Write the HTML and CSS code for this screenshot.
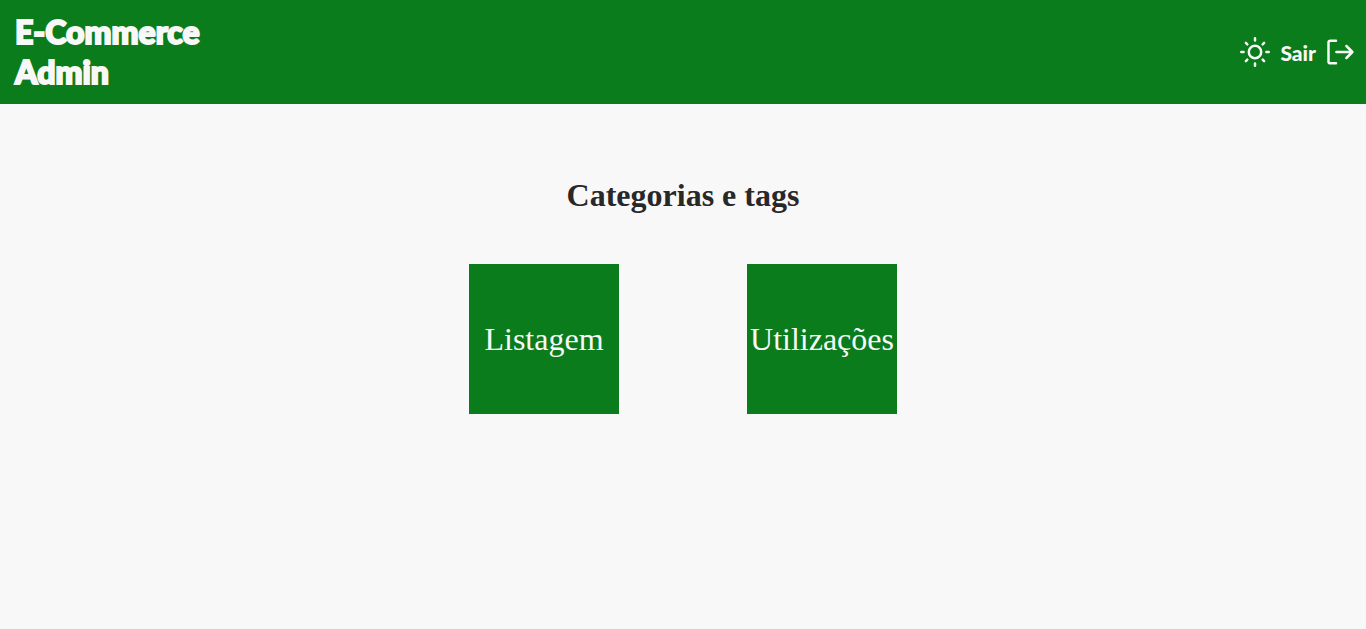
FILE: index.html
```html
<!DOCTYPE html>
<html lang="pt-BR">
<head>
  <meta charset="utf-8">
  <meta name="viewport" content="width=device-width, initial-scale=1">
  <title>E-Commerce Admin</title>
  <link rel="stylesheet" href="styles.css">
</head>
<body>
  <header class="topbar">
    <a class="brand" href="#">E-Commerce<br>Admin</a>
    <div class="actions">
      <button class="theme-toggle" type="button" aria-label="Alternar tema">
        <svg class="icon" viewBox="0 0 32 32" aria-hidden="true">
          <circle cx="16" cy="16" r="6.2"/>
          <path d="M16 2.3v2.3M16 27.4v2.3M2.3 16h2.3M27.4 16h2.3M6.9 6.9l1.4 1.4M23.7 23.7l1.4 1.4M6.9 25.1l1.4-1.4M23.7 8.3l1.4-1.4"/>
        </svg>
      </button>
      <button class="logout" type="button">
        <span>Sair</span>
        <svg class="icon" viewBox="0 0 32 32" aria-hidden="true">
          <path d="M12 4.7H6.4Q4.5 4.7 4.5 6.6V25.4Q4.5 27.3 6.4 27.3H12M12.4 16H28.4M22.4 10l6 6-6 6"/>
        </svg>
      </button>
    </div>
  </header>
  <main class="content">
    <h1 class="heading">Categorias e tags</h1>
    <nav class="tiles" aria-label="Categorias e tags">
      <a class="tile" href="#">Listagem</a>
      <a class="tile" href="#">Utilizações</a>
    </nav>
  </main>
</body>
</html>
```
FILE: styles.css
```css
* {
  box-sizing: border-box;
}

body {
  margin: 0;
  background: #f8f8f8;
  color: #282828;
  font-family: "Liberation Serif", "Times New Roman", serif;
}

.topbar {
  display: flex;
  align-items: center;
  justify-content: space-between;
  padding: 12px 10px 12px 15px;
  background: #0a7c1b;
  color: #f8f8f8;
  font-family: Lato, sans-serif;
}

.brand {
  color: inherit;
  font-size: 32px;
  font-weight: 900;
  line-height: 40px;
  text-decoration: none;
  -webkit-text-stroke: 2px currentColor;
}

.actions {
  display: flex;
  align-items: center;
  gap: 9px;
}

.theme-toggle,
.logout {
  display: flex;
  align-items: center;
  gap: 8px;
  padding: 0;
  border: 0;
  background: none;
  color: inherit;
  font: inherit;
  font-size: 21px;
  font-weight: 900;
  cursor: pointer;
}

.icon {
  width: 32px;
  height: 32px;
  fill: none;
  stroke: currentColor;
  stroke-width: 2.5;
  stroke-linecap: round;
  stroke-linejoin: round;
}

.content {
  display: flex;
  flex-direction: column;
  align-items: center;
  gap: 50px;
  padding: 73px 16px;
}

.heading {
  margin: 0;
  font-size: 32px;
  line-height: 37px;
}

.tiles {
  display: flex;
  flex-wrap: wrap;
  justify-content: center;
  gap: 128px;
}

.tile {
  display: flex;
  align-items: center;
  justify-content: center;
  width: 150px;
  height: 150px;
  background: #0a7c1b;
  color: #f8f8f8;
  font-size: 32px;
  text-decoration: none;
}
```
